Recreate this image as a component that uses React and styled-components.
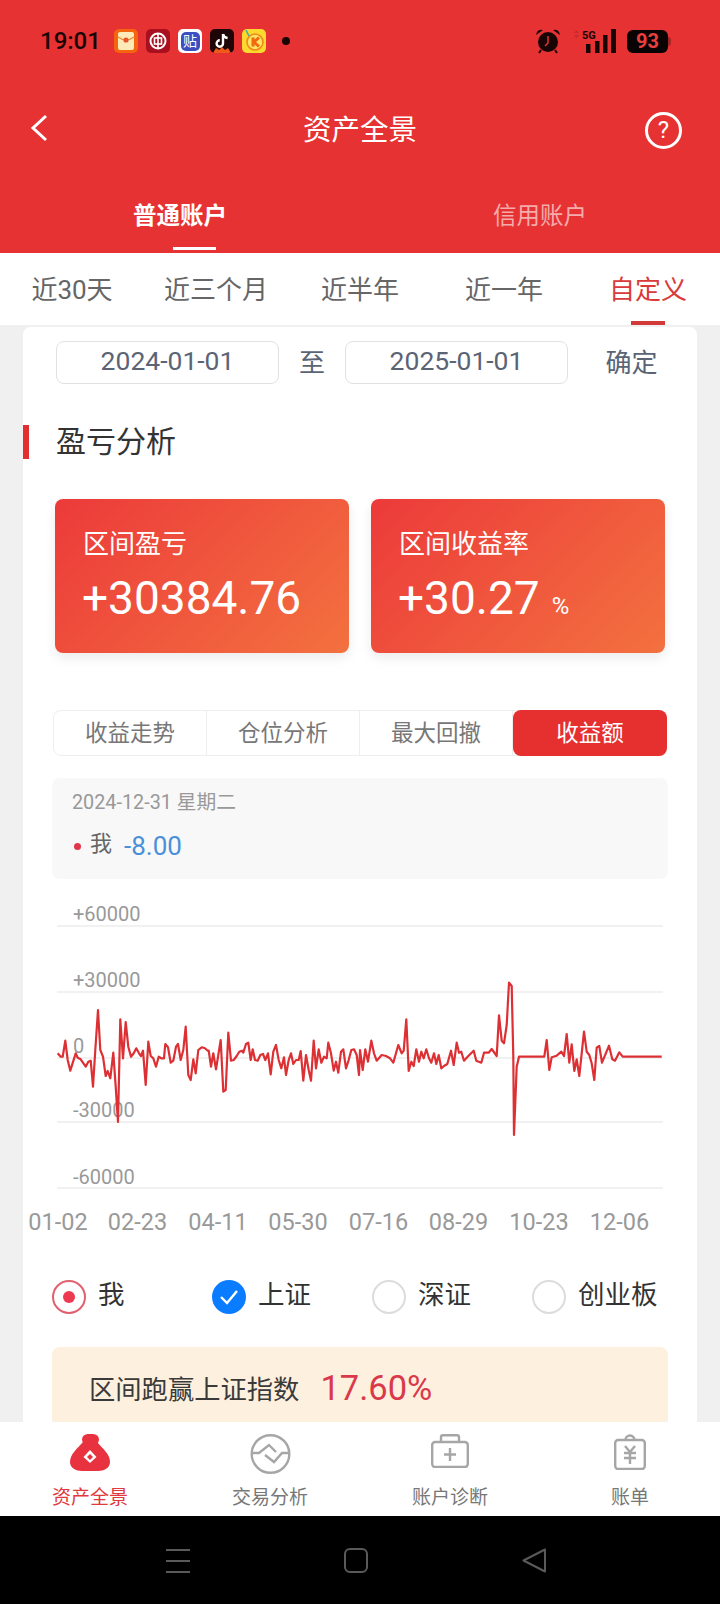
import React from 'react'
import styled, { createGlobalStyle } from 'styled-components'

const GlobalStyle = createGlobalStyle`
  html, body {
    margin: 0;
    padding: 0;
    background: #000;
  }
  * {
    box-sizing: border-box;
  }
  body {
    font-family: Roboto, "Noto Sans CJK SC", sans-serif;
  }
`

const RED = '#e63232'

const PERIODS = ['近30天', '近三个月', '近半年', '近一年', '自定义']
const SEGMENTS = ['收益走势', '仓位分析', '最大回撤', '收益额']
const Y_LABELS = [
  { text: '+60000', y: 43 },
  { text: '+30000', y: 109 },
  { text: '0', y: 175 },
  { text: '-30000', y: 239 },
  { text: '-60000', y: 306 },
]
const GRID_LINES = [48, 114, 180, 244, 310]
const X_LABELS = [
  { text: '01-02', x: 35 },
  { text: '02-23', x: 114.5 },
  { text: '04-11', x: 195 },
  { text: '05-30', x: 275 },
  { text: '07-16', x: 355.5 },
  { text: '08-29', x: 435.5 },
  { text: '10-23', x: 516 },
  { text: '12-06', x: 596.5 },
]

// daily profit curve, in thirds of a pixel so the spikes stay easy to edit
const CURVE_START = [
  83,490, 92,500, 98,500, 106,452, 113,510, 121,542, 137,490, 143,503, 152,508, 167,530, 175,515, 182,512,
  189,590, 196,480, 204,360, 211,480, 219,500, 227,558, 233,543, 241,565, 250,488, 257,590, 264,696, 271,388,
  279,505, 287,396, 295,470, 303,500, 311,490, 319,475, 327,490, 333,498, 339,482, 347,585, 355,455, 362,498,
  370,505, 378,530, 386,500, 394,505, 402,505, 406,462, 414,472, 422,518, 430,512, 438,470, 444,462, 452,510,
  460,480, 467,410, 475,555, 482,570, 490,508, 497,550, 505,480, 515,472, 525,475, 533,482, 536,482, 543,530,
  550,490, 558,538, 572,450, 580,605, 587,600, 595,428, 603,512, 611,510, 620,498, 628,485, 636,482, 640,488,
  648,462, 655,458, 662,510, 668,478, 675,510, 683,512, 691,495, 699,492, 706,510, 714,490, 722,553, 730,485,
  738,465, 746,510, 754,535, 762,502, 768,555, 776,510, 783,490, 790,522, 798,510, 806,510, 812,483, 820,572,
  828,495, 836,540, 843,572, 851,452, 858,535, 866,478, 874,518, 882,500, 890,505, 895,458, 903,490, 911,542,
  918,515, 925,548, 933,485, 940,478, 948,535, 956,510, 964,480, 972,478, 980,495, 987,555,
]
const CURVE_END = [
  0,480, 8,540, 16,478, 24,515, 34,452, 42,490, 50,512, 65,495, 78,498, 90,505, 100,518, 115,465, 125,490,
  131,482, 139,388, 146,543, 154,515, 161,528, 169,478, 177,515, 184,485, 191,505, 199,478, 207,505, 214,518,
  222,490, 229,522, 236,495, 244,535, 252,528, 262,522, 273,482, 281,525, 290,458, 297,488, 304,485, 312,512,
  325,498, 341,482, 349,512, 364,518, 372,488, 386,488, 395,477, 410,498, 417,376, 425,452, 432,460, 440,405,
  447,278, 455,288, 460,500, 462,735, 470,530, 477,500, 553,500, 560,450, 568,540, 575,502, 590,497, 604,485,
  612,498, 620,432, 628,518, 635,463, 643,543, 650,508, 658,558, 672,425, 680,485, 688,495, 695,520, 703,570,
  710,473, 718,468, 726,518, 747,467, 757,508, 765,512, 778,487, 788,500, 905,500,
]

const toPoints = (raw, offsetX) => {
  const out = []
  for (let i = 0; i < raw.length; i += 2) {
    out.push(`${(offsetX + raw[i] / 3).toFixed(1)},${(12 + raw[i + 1] / 3).toFixed(1)}`)
  }
  return out.join(' ')
}
const CURVE_POINTS = `${toPoints(CURVE_START, 7)} ${toPoints(CURVE_END, 337)}`

const StatusIcons = () => (
  <AppIcons>
    <AppIcon $bg="#f5650f">
      <svg width="24" height="24" viewBox="0 0 24 24">
        <rect x="4" y="3" width="16" height="18" rx="2" fill="#fdeab8" />
        <path d="M4 8 Q12 14 20 8" stroke="#f08a2c" strokeWidth="1.2" fill="none" />
        <circle cx="12" cy="11" r="2.6" fill="#e8542a" />
      </svg>
    </AppIcon>
    <AppIcon $bg="#a8101f">
      <svg width="24" height="24" viewBox="0 0 24 24">
        <circle cx="12" cy="12" r="7.5" stroke="#fff" strokeWidth="2" fill="none" />
        <rect x="8.5" y="9" width="7" height="6" stroke="#fff" strokeWidth="1.6" fill="none" />
        <path d="M12 5 V19" stroke="#fff" strokeWidth="1.6" />
      </svg>
    </AppIcon>
    <AppIcon $bg="#fff">
      <TieBadge>贴</TieBadge>
    </AppIcon>
    <AppIcon $bg="#1e0606">
      <svg width="24" height="24" viewBox="0 0 24 24">
        <path d="M3 24 L6 19 L9 21 L12 18 L15 21 L18 19 L21 24 Z" fill="#f0591c" />
        <path
          d="M13 5 V14.5 A3.2 3.2 0 1 1 9.8 11.3 M13 5 Q13.8 8.6 17.6 9"
          stroke="#fff"
          strokeWidth="2.4"
          fill="none"
        />
      </svg>
    </AppIcon>
    <AppIcon $bg="#fbd92f">
      <svg width="24" height="24" viewBox="0 0 24 24">
        <circle cx="13" cy="13" r="8" stroke="#f08a12" strokeWidth="1.6" fill="#fde36a" />
        <path d="M11 8.5 V17.5 M17 8.5 L12 13 L17 17.5" stroke="#f26a0c" strokeWidth="3" fill="none" />
        <path d="M4 1 L7 7" stroke="#3fb59b" strokeWidth="1.6" />
      </svg>
    </AppIcon>
  </AppIcons>
)

const AlarmIcon = () => (
  <AlarmSvg width="26" height="26" viewBox="0 0 26 26">
    <circle cx="13" cy="14" r="10" fill="#1a0505" />
    <path d="M1 7 Q2 1 8 2 Z M25 7 Q24 1 18 2 Z" fill="#1a0505" />
    <path d="M6 22 L4 25 M20 22 L22 25" stroke="#1a0505" strokeWidth="2" />
    <path d="M13 8 V15 L10 18" stroke={RED} strokeWidth="1.5" fill="none" />
  </AlarmSvg>
)

const SignalIcon = () => (
  <svg width="46" height="26" viewBox="0 0 46 26">
    <path d="M2 5 L4.5 2 L7 5 Z M2 7 L4.5 10 L7 7 Z" fill="#c82a2a" />
    <NetworkLabel x="10" y="11">5G</NetworkLabel>
    <rect x="14" y="16" width="4.5" height="9" fill="#1a0505" />
    <rect x="23" y="13" width="4.5" height="12" fill="#1a0505" />
    <rect x="31" y="7" width="4.5" height="18" fill="#1a0505" />
    <rect x="39" y="1" width="5" height="24" fill="#1a0505" />
  </svg>
)

const BagIcon = () => (
  <svg width="40" height="37" viewBox="0 0 40 37">
    <rect x="12" y="0" width="17" height="11" rx="6" fill="#e8323f" />
    <path
      d="M13 8 C7 15 0 20 0 28 C0 34 6 37 12 37 H28 C34 37 40 34 40 28 C40 20 33 15 27 8 Z"
      fill="#e8323f"
    />
    <path d="M20 16 L26.5 23 L20 29 L13.5 23 Z" fill="#fff" />
    <path d="M20 20 L23 23 L20 26 L17 23 Z" fill="#e8323f" />
  </svg>
)

const TradeIcon = () => (
  <svg width="41" height="40" viewBox="0 0 41 40" fill="none" stroke="#a6a6a6" strokeWidth="2.4">
    <circle cx="20.5" cy="20" r="18.8" />
    <path d="M1.5 19 H9 L19 11 L26 18" />
    <path d="M15 21 L24 28 L32 19 H39.5" />
  </svg>
)

const CaseIcon = () => (
  <svg width="38" height="34" viewBox="0 0 38 34" fill="none" stroke="#a6a6a6" strokeWidth="2.4">
    <rect x="1.2" y="8" width="35.6" height="25" rx="3" />
    <path d="M10 8 V3 Q10 1.2 12 1.2 H26 Q28 1.2 28 3 V8" />
    <path d="M19 14 V27 M13 20.5 H25" />
  </svg>
)

const BillIcon = () => (
  <svg width="32" height="36" viewBox="0 0 32 36" fill="none" stroke="#a6a6a6" strokeWidth="2.4">
    <rect x="1.2" y="6" width="29.6" height="29" rx="3" />
    <path d="M11.5 6 A4.5 4.5 0 0 1 20.5 6" />
    <path d="M11 12 L16 18 L21 12 M10 19 H22 M10 24 H22 M16 18 V30" />
  </svg>
)

const CheckMark = () => (
  <svg width="20" height="16" viewBox="0 0 20 16" fill="none" stroke="#fff" strokeWidth="2.4">
    <path d="M2 8 L8 14 L18 2" />
  </svg>
)

const App = () => (
  <Page>
    <GlobalStyle />
    <Header>
      <StatusBar>
        <StatusLeft>
          <Clock>19:01</Clock>
          <StatusIcons />
          <NoticeDot />
        </StatusLeft>
        <StatusRight>
          <AlarmIcon />
          <SignalIcon />
          <Battery>93</Battery>
        </StatusRight>
      </StatusBar>
      <TitleBar>
        <BackIcon width="18" height="28" viewBox="0 0 18 28" fill="none" stroke="#fff" strokeWidth="3">
          <path d="M16 2 L3 14 L16 26" />
        </BackIcon>
        <Title>资产全景</Title>
        <HelpIcon>?</HelpIcon>
      </TitleBar>
      <AccountTabs>
        <AccountTab $active>普通账户</AccountTab>
        <AccountTab>信用账户</AccountTab>
      </AccountTabs>
    </Header>

    <PeriodTabs>
      {PERIODS.map((label, i) => (
        <PeriodTab key={label} $active={i === PERIODS.length - 1}>
          {label}
        </PeriodTab>
      ))}
    </PeriodTabs>

    <Body>
      <Card>
        <DateRow>
          <DateInput>2024-01-01</DateInput>
          <DateSep>至</DateSep>
          <DateInput>2025-01-01</DateInput>
          <DateSep>确定</DateSep>
        </DateRow>

        <SectionHead>
          <SectionMark />
          <SectionTitle>盈亏分析</SectionTitle>
        </SectionHead>

        <StatGrid>
          <StatCard>
            <StatLabel>区间盈亏</StatLabel>
            <StatValue>+30384.76</StatValue>
          </StatCard>
          <StatCard>
            <StatLabel>区间收益率</StatLabel>
            <StatValue>
              +30.27<StatUnit>%</StatUnit>
            </StatValue>
          </StatCard>
        </StatGrid>

        <Segments>
          {SEGMENTS.map((label, i) => (
            <Segment key={label} $active={i === SEGMENTS.length - 1}>
              {label}
            </Segment>
          ))}
        </Segments>

        <Tip>
          <TipDate>2024-12-31 星期二</TipDate>
          <TipRow>
            <TipDot />
            <TipName>我</TipName>
            <TipValue>-8.00</TipValue>
          </TipRow>
        </Tip>

        <ChartSvg width="674" height="361" viewBox="0 1 674 361">
          {GRID_LINES.map((y) => (
            <line key={y} x1="34" x2="640" y1={y} y2={y} stroke="#ececec" strokeWidth="1.5" />
          ))}
          {Y_LABELS.map((l) => (
            <AxisText key={l.text} x="50" y={l.y} $size={20}>
              {l.text}
            </AxisText>
          ))}
          {X_LABELS.map((l) => (
            <AxisText key={l.text} x={l.x} y="352" $size={23.5} textAnchor="middle">
              {l.text}
            </AxisText>
          ))}
          <polyline points={CURVE_POINTS} fill="none" stroke="#dc3034" strokeWidth="2.2" strokeLinejoin="round" />
        </ChartSvg>

        <Legend>
          <LegendItem>
            <RadioMine />
            <LegendText>我</LegendText>
          </LegendItem>
          <LegendItem>
            <RadioChecked>
              <CheckMark />
            </RadioChecked>
            <LegendText>上证</LegendText>
          </LegendItem>
          <LegendItem>
            <RadioEmpty />
            <LegendText>深证</LegendText>
          </LegendItem>
          <LegendItem>
            <RadioEmpty />
            <LegendText>创业板</LegendText>
          </LegendItem>
        </Legend>

        <Banner>
          <BannerText>区间跑赢上证指数</BannerText>
          <BannerValue>17.60%</BannerValue>
        </Banner>
      </Card>
    </Body>

    <BottomNav>
      <NavItem $active>
        <NavIcon><BagIcon /></NavIcon>
        资产全景
      </NavItem>
      <NavItem>
        <NavIcon><TradeIcon /></NavIcon>
        交易分析
      </NavItem>
      <NavItem>
        <NavIcon><CaseIcon /></NavIcon>
        账户诊断
      </NavItem>
      <NavItem>
        <NavIcon><BillIcon /></NavIcon>
        账单
      </NavItem>
    </BottomNav>

    <SystemBar>
      <svg width="24" height="25" viewBox="0 0 24 25" stroke="#5a5a5a" strokeWidth="2">
        <path d="M0 2 H24 M0 13 H24 M0 24 H24" />
      </svg>
      <svg width="24" height="25" viewBox="0 0 24 25" stroke="#5a5a5a" strokeWidth="2" fill="none">
        <rect x="1" y="1" width="22" height="23" rx="5" />
      </svg>
      <svg width="24" height="25" viewBox="0 0 24 25" stroke="#5a5a5a" strokeWidth="2" fill="none" strokeLinejoin="round">
        <path d="M23 1.5 V23.5 L1.5 12.5 Z" />
      </svg>
    </SystemBar>
  </Page>
)

const Page = styled.div`
  width: 720px;
  height: 1604px;
  display: flex;
  flex-direction: column;
  overflow: hidden;
  background: #f0f0f0;
`

const Header = styled.header`
  height: 253px;
  flex: none;
  display: flex;
  flex-direction: column;
  background: ${RED};
`

const StatusBar = styled.div`
  height: 96px;
  padding: 28px 52px 0 40px;
  display: flex;
  justify-content: space-between;
  align-items: flex-start;
`

const StatusLeft = styled.div`
  display: flex;
  align-items: center;
  height: 26px;
`

const Clock = styled.span`
  width: 74px;
  font-size: 24px;
  font-weight: 500;
  line-height: 26px;
  color: #1a0505;
`

const AppIcons = styled.div`
  display: flex;
  gap: 8px;
`

const AppIcon = styled.div`
  width: 24px;
  height: 24px;
  display: flex;
  align-items: center;
  justify-content: center;
  border-radius: 5px;
  overflow: hidden;
  background: ${(p) => p.$bg};
`

const TieBadge = styled.span`
  width: 19px;
  height: 19px;
  border-radius: 5px;
  background: #3c4fc0;
  color: #fff;
  font-size: 14px;
  line-height: 19px;
  text-align: center;
`

const NoticeDot = styled.span`
  width: 8px;
  height: 8px;
  margin-left: 16px;
  border-radius: 50%;
  background: #1a0505;
`

const StatusRight = styled.div`
  display: flex;
  align-items: center;
  height: 26px;
  gap: 9px;
`

const AlarmSvg = styled.svg`
  margin-right: 2px;
`

const NetworkLabel = styled.text`
  font-family: Roboto, sans-serif;
  font-size: 11px;
  font-weight: 700;
  fill: #1a0505;
`

const Battery = styled.span`
  position: relative;
  width: 41px;
  height: 23px;
  border-radius: 6px;
  background: #0a0303;
  color: #e8403f;
  font-size: 20px;
  font-weight: 700;
  line-height: 23px;
  text-align: center;

  &::after {
    content: '';
    position: absolute;
    top: 7px;
    right: -3px;
    width: 3px;
    height: 9px;
    border-radius: 0 3px 3px 0;
    background: #a52525;
  }
`

const TitleBar = styled.div`
  height: 64px;
  padding: 0 38px;
  display: grid;
  grid-template-columns: 1fr auto 1fr;
  align-items: center;
`

const BackIcon = styled.svg`
  margin-left: -8px;
`

const Title = styled.h1`
  margin: 6px 0 0;
  font-size: 28.5px;
  font-weight: 400;
  line-height: 40px;
  color: #fff;
`

const HelpIcon = styled.span`
  justify-self: end;
  width: 37px;
  height: 37px;
  margin-top: 5px;
  border: 3px solid #fff;
  border-radius: 50%;
  color: #fff;
  font-size: 24px;
  font-weight: 400;
  line-height: 31px;
  text-align: center;
`

const AccountTabs = styled.div`
  flex: 1;
  padding-bottom: 3px;
  display: grid;
  grid-template-columns: 1fr 1fr;
`

const AccountTab = styled.div`
  position: relative;
  padding-top: 41px;
  text-align: center;
  font-size: 23.5px;
  font-weight: ${(p) => (p.$active ? 700 : 400)};
  line-height: 30px;
  color: ${(p) => (p.$active ? '#fff' : 'rgba(255, 255, 255, 0.6)')};

  ${(p) =>
    p.$active &&
    `&::after {
      content: '';
      position: absolute;
      left: 50%;
      bottom: 0;
      width: 43px;
      height: 3px;
      margin-left: -7px;
      background: #fff;
    }`}
`

const PeriodTabs = styled.nav`
  height: 72px;
  flex: none;
  display: grid;
  grid-template-columns: repeat(5, 1fr);
  background: #fff;
`

const PeriodTab = styled.div`
  position: relative;
  padding-top: 19px;
  text-align: center;
  font-size: 26px;
  line-height: 36px;
  color: ${(p) => (p.$active ? '#d93a3a' : '#666')};

  ${(p) =>
    p.$active &&
    `&::after {
      content: '';
      position: absolute;
      left: 50%;
      bottom: 0;
      width: 34px;
      height: 4px;
      margin-left: -17px;
      background: #d23a3a;
    }`}
`

const Body = styled.main`
  flex: 1;
  min-height: 0;
  padding: 2px 23px 0;
`

const Card = styled.section`
  height: 100%;
  overflow: hidden;
  background: #fff;
  border-radius: 8px 8px 0 0;
`

const DateRow = styled.div`
  padding: 14px 2px 0 33px;
  display: grid;
  grid-template-columns: 223px 66px 223px 1fr;
  align-items: center;
`

const DateInput = styled.div`
  height: 43px;
  border: 1px solid #dfe1e5;
  border-radius: 8px;
  text-align: center;
  font-size: 26.5px;
  line-height: 38px;
  color: #5a6475;
`

const DateSep = styled.div`
  text-align: center;
  font-size: 26px;
  line-height: 36px;
  color: #5a6475;
`

const SectionHead = styled.div`
  margin-top: 41px;
  height: 34px;
  display: flex;
  align-items: center;
`

const SectionMark = styled.span`
  width: 6px;
  height: 34px;
  background: #e23030;
`

const SectionTitle = styled.h2`
  margin: 0 0 0 27px;
  font-size: 30px;
  font-weight: 400;
  line-height: 40px;
  color: #333;
`

const StatGrid = styled.div`
  margin-top: 40px;
  padding-left: 32px;
  display: grid;
  grid-template-columns: 294px 294px;
  gap: 22px;
`

const StatCard = styled.div`
  height: 154px;
  padding: 27px 0 0 28px;
  border-radius: 8px;
  background: linear-gradient(135deg, #ec3a3a, #f3713f);
  box-shadow: 0 5px 12px rgba(0, 0, 0, 0.08);
  color: #fff;
`

const StatLabel = styled.div`
  font-size: 26px;
  line-height: 36px;
`

const StatValue = styled.div`
  margin: 8px 0 0 -1px;
  font-size: 46px;
  line-height: 56px;
`

const StatUnit = styled.span`
  margin-left: 12px;
  font-size: 24px;
`

const Segments = styled.div`
  margin: 57px 30px 0;
  height: 46px;
  display: grid;
  grid-template-columns: repeat(4, 1fr);
  border: 1px solid #eeeeee;
  border-radius: 8px;
`

const Segment = styled.div`
  margin: ${(p) => (p.$active ? '-1px -1px -1px 0' : '0')};
  text-align: center;
  font-size: 22.5px;
  line-height: ${(p) => (p.$active ? '46px' : '44px')};
  color: ${(p) => (p.$active ? '#fff' : '#777')};
  background: ${(p) => (p.$active ? '#e62f2f' : 'transparent')};
  border-radius: ${(p) => (p.$active ? '8px' : '0')};
  border-right: ${(p) => (p.$active ? 'none' : '1px solid #eeeeee')};
`

const Tip = styled.div`
  margin: 22px 29px 0;
  height: 101px;
  padding: 12px 20px 0;
  background: #f8f8f8;
  border-radius: 8px;
`

const TipDate = styled.div`
  font-size: 19.8px;
  line-height: 26px;
  color: #999;
`

const TipRow = styled.div`
  margin-top: 12px;
  height: 36px;
  display: flex;
  align-items: center;
`

const TipDot = styled.span`
  width: 7px;
  height: 7px;
  margin-left: 2px;
  border-radius: 50%;
  background: #e0364a;
`

const TipName = styled.span`
  margin: 0 0 4px 9px;
  font-size: 22px;
  line-height: 28px;
  color: #666;
`

const TipValue = styled.span`
  margin-left: 12px;
  font-size: 26px;
  color: #4a90d9;
`

const ChartSvg = styled.svg`
  display: block;
`

const AxisText = styled.text`
  font-family: Roboto, sans-serif;
  font-size: ${(p) => p.$size}px;
  fill: #999;
`

const Legend = styled.div`
  margin-top: 40px;
  padding-left: 29px;
  display: grid;
  grid-template-columns: repeat(4, 160px);
`

const LegendItem = styled.label`
  height: 34px;
  display: flex;
  align-items: center;
  gap: 12px;
  color: #333;
`

const LegendText = styled.span`
  margin-bottom: 5px;
  font-size: 26.5px;
  line-height: 34px;
`

const RadioEmpty = styled.span`
  width: 34px;
  height: 34px;
  flex: none;
  border: 2px solid #dcdcdc;
  border-radius: 50%;
`

const RadioMine = styled(RadioEmpty)`
  display: flex;
  align-items: center;
  justify-content: center;
  border-color: #e2606e;

  &::after {
    content: '';
    width: 12px;
    height: 12px;
    border-radius: 50%;
    background: #ee3a50;
  }
`

const RadioChecked = styled(RadioEmpty)`
  display: flex;
  align-items: center;
  justify-content: center;
  border: none;
  background: #0a7cff;
`

const Banner = styled.div`
  margin: 33px 29px 0;
  height: 120px;
  padding: 20px 0 0 37px;
  display: flex;
  align-items: flex-start;
  gap: 21px;
  background: #fef0de;
  border-radius: 8px;
`

const BannerText = styled.span`
  font-size: 26.3px;
  line-height: 46px;
  color: #3a3a3a;
`

const BannerValue = styled.span`
  font-size: 34.5px;
  line-height: 42px;
  color: #d9394a;
`

const BottomNav = styled.nav`
  height: 94px;
  flex: none;
  display: grid;
  grid-template-columns: repeat(4, 1fr);
  background: #fff;
`

const NavItem = styled.div`
  display: flex;
  flex-direction: column;
  align-items: center;
  font-size: 19px;
  line-height: 26px;
  color: ${(p) => (p.$active ? '#e03a3f' : '#777')};
`

const NavIcon = styled.span`
  height: 63px;
  padding-top: 12px;
  display: flex;
  align-items: flex-start;
  justify-content: center;
`

const SystemBar = styled.div`
  height: 88px;
  flex: none;
  padding: 32px 0 0 166px;
  display: flex;
  align-items: flex-start;
  gap: 154px;
  background: #000;
`

export default App
